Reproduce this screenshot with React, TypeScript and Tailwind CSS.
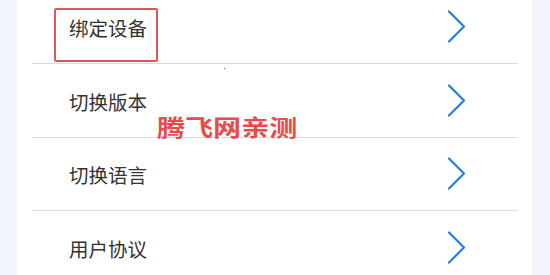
const items = ['绑定设备', '切换版本', '切换语言', '用户协议']

function Chevron() {
  return (
    <svg width="19" height="33" viewBox="0 0 19 33" fill="none" className="shrink-0">
      <polyline
        points="2,1.5 17,16.5 2,31.5"
        stroke="#2a7ed6"
        strokeWidth="2.2"
        strokeLinecap="round"
        strokeLinejoin="round"
      />
    </svg>
  )
}

export default function App() {
  return (
    <div
      className="relative w-[550px] h-[275px] overflow-hidden bg-[#f2f5fb] flex"
      style={{ fontFamily: '"Noto Sans", "Noto Sans CJK SC", sans-serif' }}
    >
      <div className="ml-[17px] w-[515px] h-full bg-white">
        <div className="ml-[15px] mr-[14px] -mt-[9.5px]">
          {items.map((label) => (
            <div
              key={label}
              className="h-[73.5px] border-b border-[#dcdcdc] flex items-center justify-between pl-[37px] pr-[52px]"
            >
              <span className="text-[19.5px] text-[#333333] leading-none pt-[4px]">{label}</span>
              <Chevron />
            </div>
          ))}
        </div>
      </div>

      {/* annotation box */}
      <div className="absolute left-[54px] top-[8px] w-[104px] h-[54px] border-2 border-[#e0575a] rounded-[2px]" />

      {/* watermark */}
      <div
        className="absolute left-[157px] top-[115px] text-[23px] font-bold text-[#e94b4b] leading-none scale-x-[1.22] origin-left whitespace-nowrap"
        style={{ fontFamily: '"Noto Sans CJK SC", sans-serif' }}
      >
        腾飞网亲测
      </div>

      <div className="absolute left-[224px] top-[68px] w-[1px] h-[1px] bg-[#666]" />
    </div>
  )
}
